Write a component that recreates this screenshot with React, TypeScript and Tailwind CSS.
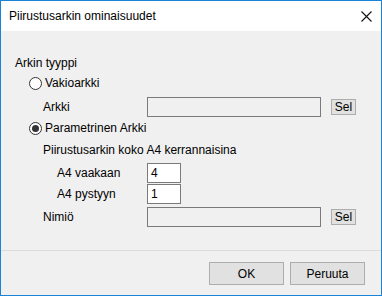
import React from "react";

const font = { fontFamily: '"Liberation Sans", Arial, sans-serif' };

const Radio = ({ checked, label }: { checked?: boolean; label: string }) => (
  <div className="flex items-center h-4 pl-[14px]">
    <span className="w-[13px] h-[13px] rounded-full border border-[#333333] bg-white flex items-center justify-center">
      {checked && <span className="w-[7px] h-[7px] rounded-full bg-[#333333]" />}
    </span>
    <span className="ml-[3px]">{label}</span>
  </div>
);

const SelButton = () => (
  <button className="ml-[10px] w-[25px] h-4 border border-[#adadad] bg-[#e1e1e1] text-[12px] leading-[14px] text-black flex items-center justify-center">
    Sel
  </button>
);

export default function App() {
  return (
    <div
      className="w-[382px] h-[296px] border border-[#1883d7] bg-[#f0f0f0] flex flex-col text-[12px] leading-4 text-black"
      style={font}
    >
      <div className="h-[30px] bg-white flex items-center justify-between pl-[8px] pr-[9px] shrink-0">
        <span className="text-[12px]">Piirustusarkin ominaisuudet</span>
        <svg width="11" height="11" viewBox="0 0 11 11" className="shrink-0">
          <path d="M0.5 0.5 L10.5 10.5 M10.5 0.5 L0.5 10.5" stroke="#111" strokeWidth="1.1" />
        </svg>
      </div>

      <div className="flex-1 flex flex-col px-[14px] pt-[24px]">
        <div className="h-4">Arkin tyyppi</div>

        <div className="mt-[4px]">
          <Radio label="Vakioarkki" />
        </div>

        <div className="mt-[6px] h-5 flex items-center pl-[28px]">
          <span className="w-[104px]">Arkki</span>
          <div className="w-[174px] h-5 border border-[#7a7a7a] bg-[#f0f0f0]" />
          <SelButton />
        </div>

        <div className="mt-[3px]">
          <Radio checked label="Parametrinen Arkki" />
        </div>

        <div className="mt-[6px] h-4 pl-[28px]">Piirustusarkin koko A4 kerrannaisina</div>

        <div className="mt-[5px] h-5 flex items-center pl-[42px]">
          <span className="w-[90px]">A4 vaakaan</span>
          <div className="w-[34px] h-5 border border-[#7a7a7a] bg-white pl-[3px] flex items-center">4</div>
        </div>

        <div className="mt-[1px] h-5 flex items-center pl-[42px]">
          <span className="w-[90px]">A4 pystyyn</span>
          <div className="w-[34px] h-5 border border-[#7a7a7a] bg-white pl-[3px] flex items-center">1</div>
        </div>

        <div className="mt-[3px] h-5 flex items-center pl-[28px]">
          <span className="w-[104px]">Nimiö</span>
          <div className="w-[174px] h-5 border border-[#7a7a7a] bg-[#f0f0f0]" />
          <SelButton />
        </div>
      </div>

      <div className="h-[45px] shrink-0 border-t border-[#dcdcdc] flex justify-end items-start pt-[11px] pr-[16px] gap-[6px]">
        <button className="w-[75px] h-[23px] border border-[#adadad] bg-[#e1e1e1] text-[12px]">OK</button>
        <button className="w-[75px] h-[23px] border border-[#adadad] bg-[#e1e1e1] text-[12px]">Peruuta</button>
      </div>
    </div>
  );
}
